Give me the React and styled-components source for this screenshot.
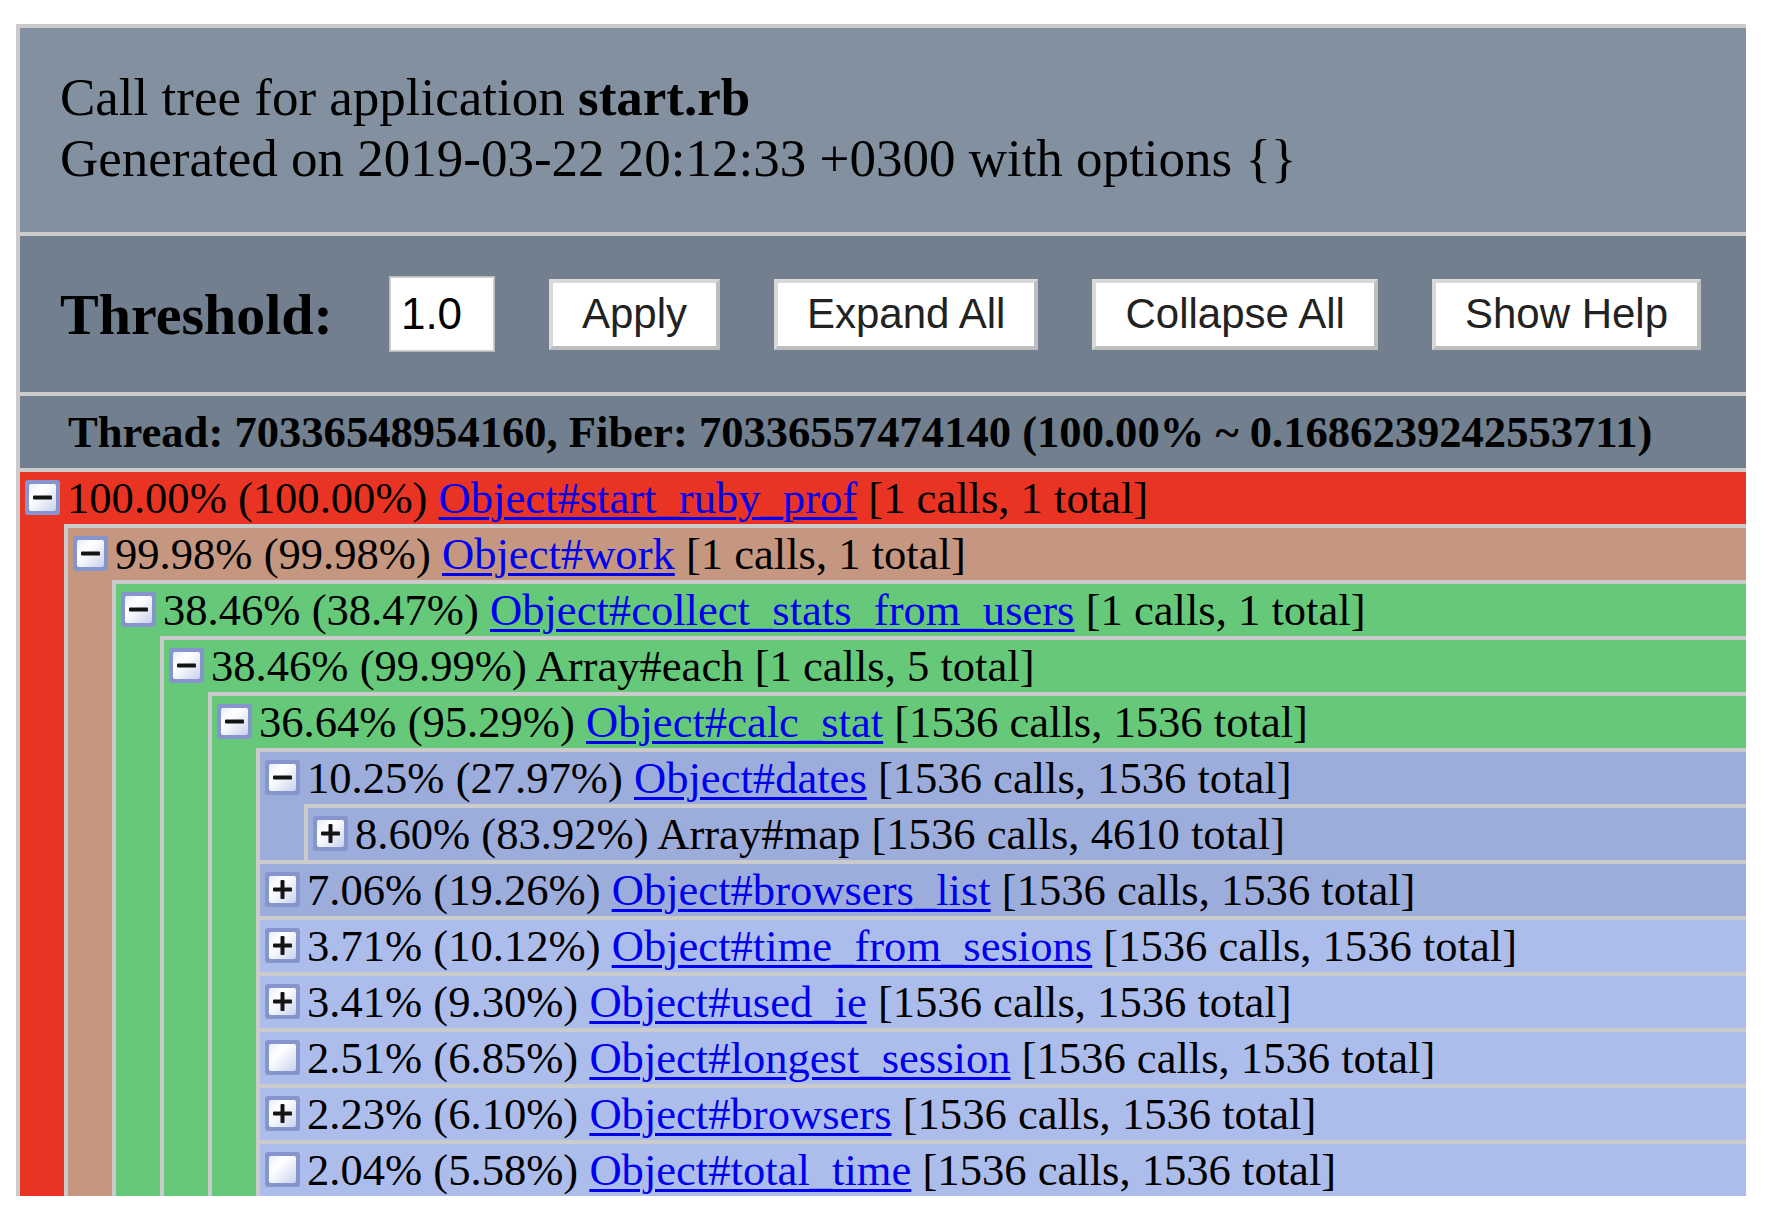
import React, { useId } from "react"
import styled, { createGlobalStyle } from "styled-components"

const GlobalStyle = createGlobalStyle`
  html, body {
    margin: 0;
    padding: 0;
    background: #ffffff;
  }
  body {
    font-family: "Liberation Serif", "Times New Roman", serif;
    color: #000;
  }
`

const Page = styled.div`
  padding: 24px 0 0 16px;
`

const Frame = styled.div`
  width: 1730px;
  height: 1172px;
  overflow: hidden;
`

const Band = styled.div`
  border-top: 4px solid #cbcbcb;
  border-left: 4px solid #cbcbcb;
  background: ${p => p.$bg};
`

const TitleBar = styled(Band)`
  padding: 39px 40px 43px 40px;
  font-size: 53px;
  line-height: 61px;
`

const Commands = styled(Band)`
  height: 156px;
  display: flex;
  align-items: center;
  gap: 54px;
  padding-left: 40px;
`

const Label = styled.span`
  font-size: 58px;
  font-weight: bold;
  margin-right: 2px;
`

const ThresholdInput = styled.input`
  width: 106px;
  height: 76px;
  box-sizing: border-box;
  padding: 0 10px;
  border: 2px solid #d2d2d2;
  outline: 1px solid #b8b8b8;
  outline-offset: -1px;
  background: #fff;
  color: #000;
  font: 44px "Liberation Sans", Arial, sans-serif;
`

const CommandButton = styled.button`
  height: 71px;
  box-sizing: border-box;
  padding: 0 29px;
  background: #fff;
  border: 4px solid;
  border-color: #d9d9d9 #bdbdbd #bdbdbd #d9d9d9;
  color: #222;
  font: 42px "Liberation Sans", Arial, Helvetica, sans-serif;
  line-height: 1;
  white-space: nowrap;
`

const ThreadBar = styled(Band)`
  padding: 10px 0 10px 48px;
  font-size: 44.6px;
  line-height: 52px;
  font-weight: bold;
  white-space: nowrap;
`

const Tree = styled.ul`
  list-style: none;
  margin: 0;
  padding: 0;
`

const Node = styled.li`
  margin-left: ${p => (p.$root ? 0 : 44)}px;
  border-top: 4px solid #cbcbcb;
  border-left: 4px solid #cbcbcb;
  background: ${p => p.$bg};
`

const Row = styled.div`
  display: flex;
  align-items: flex-start;
  height: 52px;
  line-height: 52px;
  font-size: 44.6px;
  white-space: nowrap;
`

const ToggleIcon = styled.svg`
  flex: none;
  width: 35px;
  height: 35px;
  margin: 8px 7px 0 5px;
  filter: blur(0.6px);
`

const RowText = styled.span``

const MethodLink = styled.a`
  color: #0000ee;
  text-decoration: underline;
  text-decoration-thickness: 3px;
  text-underline-offset: 4px;
  cursor: pointer;
`

const colors = {
  red: "#e93424",
  brown: "#c59680",
  green: "#66c97a",
  blueDark: "#9daddb",
  blueLight: "#adbdeb",
}

const tree = [
  {
    kind: "minus", total: "100.00%", self: "100.00%", name: "Object#start_ruby_prof", link: true, calls: "1 calls, 1 total", color: "red",
    children: [
      {
        kind: "minus", total: "99.98%", self: "99.98%", name: "Object#work", link: true, calls: "1 calls, 1 total", color: "brown",
        children: [
          {
            kind: "minus", total: "38.46%", self: "38.47%", name: "Object#collect_stats_from_users", link: true, calls: "1 calls, 1 total", color: "green",
            children: [
              {
                kind: "minus", total: "38.46%", self: "99.99%", name: "Array#each", link: false, calls: "1 calls, 5 total", color: "green",
                children: [
                  {
                    kind: "minus", total: "36.64%", self: "95.29%", name: "Object#calc_stat", link: true, calls: "1536 calls, 1536 total", color: "green",
                    children: [
                      {
                        kind: "minus", total: "10.25%", self: "27.97%", name: "Object#dates", link: true, calls: "1536 calls, 1536 total", color: "blueDark",
                        children: [
                          { kind: "plus", total: "8.60%", self: "83.92%", name: "Array#map", link: false, calls: "1536 calls, 4610 total", color: "blueDark" },
                        ],
                      },
                      { kind: "plus", total: "7.06%", self: "19.26%", name: "Object#browsers_list", link: true, calls: "1536 calls, 1536 total", color: "blueDark" },
                      { kind: "plus", total: "3.71%", self: "10.12%", name: "Object#time_from_sesions", link: true, calls: "1536 calls, 1536 total", color: "blueLight" },
                      { kind: "plus", total: "3.41%", self: "9.30%", name: "Object#used_ie", link: true, calls: "1536 calls, 1536 total", color: "blueLight" },
                      { kind: "leaf", total: "2.51%", self: "6.85%", name: "Object#longest_session", link: true, calls: "1536 calls, 1536 total", color: "blueLight" },
                      { kind: "plus", total: "2.23%", self: "6.10%", name: "Object#browsers", link: true, calls: "1536 calls, 1536 total", color: "blueLight" },
                      { kind: "leaf", total: "2.04%", self: "5.58%", name: "Object#total_time", link: true, calls: "1536 calls, 1536 total", color: "blueLight" },
                    ],
                  },
                ],
              },
            ],
          },
        ],
      },
    ],
  },
]

const Toggle = ({ kind }) => {
  const id = "g" + useId().replace(/[^a-zA-Z0-9]/g, "")
  return (
    <ToggleIcon viewBox="0 0 35 35">
      <defs>
        <linearGradient id={id} x1="0" y1="0" x2="1" y2="1">
          <stop offset="0" stopColor="#e9eef9" />
          <stop offset="0.35" stopColor="#ffffff" />
          <stop offset="0.6" stopColor="#eaeef8" />
          <stop offset="1" stopColor="#c8d1ea" />
        </linearGradient>
      </defs>
      <rect width="35" height="35" rx="3" fill="#8695cc" />
      <rect x="4" y="4" width="27" height="27" rx="2" fill={`url(#${id})`} />
      {kind !== "leaf" && <rect x="8" y="15.5" width="19" height="4" rx="1" fill="#141414" />}
      {kind === "plus" && <rect x="15.5" y="8" width="4" height="19" rx="1" fill="#141414" />}
    </ToggleIcon>
  )
}

const CallNode = ({ node, root }) => (
  <Node $root={root} $bg={colors[node.color]}>
    <Row>
      <Toggle kind={node.kind} />
      <RowText>
        {`${node.total} (${node.self}) `}
        {node.link ? <MethodLink>{node.name}</MethodLink> : node.name}
        {` [${node.calls}]`}
      </RowText>
    </Row>
    {node.children && (
      <Tree>
        {node.children.map(child => (
          <CallNode key={child.name} node={child} />
        ))}
      </Tree>
    )}
  </Node>
)

export default function App() {
  return (
    <Page>
      <GlobalStyle />
      <Frame>
        <TitleBar $bg="#8290a0">
          <div>
            Call tree for application <b>start.rb</b>
          </div>
          <div>Generated on 2019-03-22 20:12:33 +0300 with options {"{}"}</div>
        </TitleBar>
        <Commands $bg="#717f8e">
          <Label>Threshold:</Label>
          <ThresholdInput defaultValue="1.0" />
          <CommandButton>Apply</CommandButton>
          <CommandButton>Expand All</CommandButton>
          <CommandButton>Collapse All</CommandButton>
          <CommandButton>Show Help</CommandButton>
        </Commands>
        <ThreadBar $bg="#717f8e">
          Thread: 70336548954160, Fiber: 70336557474140 (100.00% ~ 0.1686239242553711)
        </ThreadBar>
        <Tree>
          {tree.map(node => (
            <CallNode key={node.name} node={node} root />
          ))}
        </Tree>
      </Frame>
    </Page>
  )
}
